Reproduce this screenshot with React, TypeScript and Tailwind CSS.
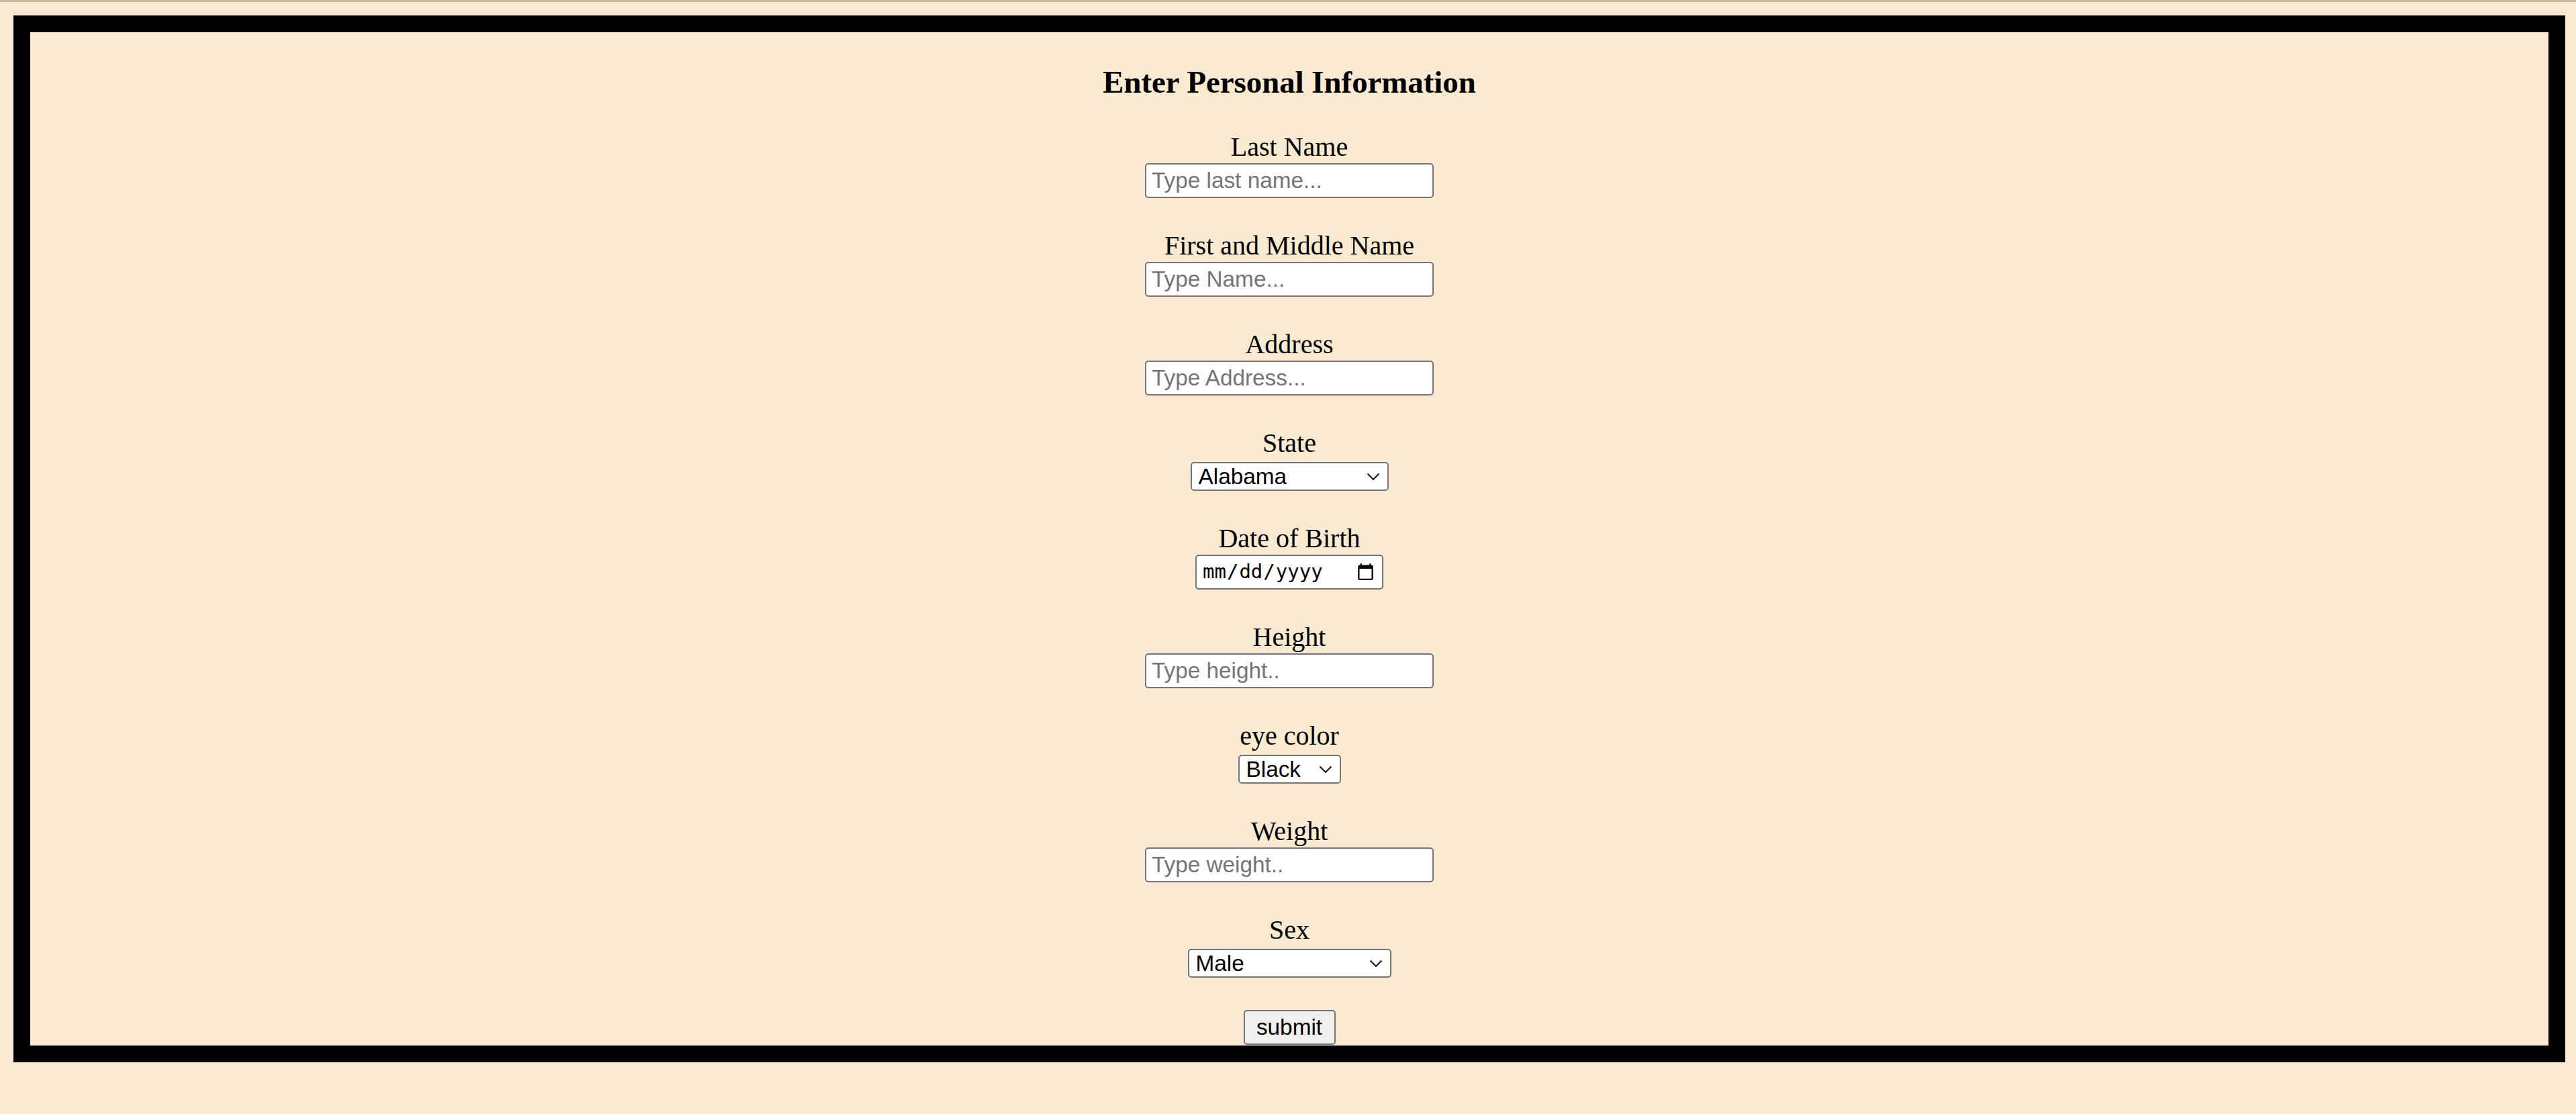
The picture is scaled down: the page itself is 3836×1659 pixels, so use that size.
import React, { useState } from "react";

const STATES = [
  "Alabama",
  "Alaska",
  "Arizona",
  "Arkansas",
  "California",
  "Colorado",
  "Connecticut",
  "Delaware",
  "Florida",
  "Georgia",
  "Massachusetts",
];

const EYE_COLORS = ["Black", "Brown", "Blue", "Green", "Hazel", "Gray"];

const SEXES = ["Male", "Female", "Prefer not to say"];

const labelClass =
  "block mt-[48px] font-['Liberation_Serif',serif] text-[40px] leading-[46px] text-black";

const inputClass =
  "block mt-[1px] w-[430px] h-[52px] px-[8px] bg-white border-2 border-[#767676] rounded-[5px] font-['Liberation_Sans',Arial,sans-serif] text-[33.33px] text-black placeholder:text-[#757575] outline-none";

function Chevron() {
  return (
    <svg
      width="20"
      height="12"
      viewBox="0 0 20 12"
      className="absolute right-[13px] top-1/2 -translate-y-1/2 pointer-events-none"
    >
      <polyline
        points="1.5,1.5 10,10 18.5,1.5"
        fill="none"
        stroke="#1a1a1a"
        strokeWidth="2.2"
      />
    </svg>
  );
}

function Select({
  options,
  width,
  value,
  onChange,
}: {
  options: string[];
  width: string;
  value: string;
  onChange: (v: string) => void;
}) {
  return (
    <div className={`relative mt-[5px] ${width}`}>
      <select
        value={value}
        onChange={(e) => onChange(e.target.value)}
        className="block w-full h-[43px] pl-[10px] pr-[40px] appearance-none bg-white border-2 border-[#767676] rounded-[5px] font-['Liberation_Sans',Arial,sans-serif] text-[33.33px] leading-none text-black outline-none"
      >
        {options.map((o) => (
          <option key={o}>{o}</option>
        ))}
      </select>
      <Chevron />
    </div>
  );
}

export default function App() {
  const [state, setState] = useState("Alabama");
  const [eyeColor, setEyeColor] = useState("Black");
  const [sex, setSex] = useState("Male");

  return (
    <div className="min-h-screen bg-[#f9ead1] border-t-[3px] border-[#c8b89b] pt-[20px] pl-[20px] pr-[16px]">
      <form
        onSubmit={(e) => e.preventDefault()}
        className="border-[25px] border-black flex flex-col items-center"
      >
        <h3 className="mt-[47px] -mb-[1px] font-['Liberation_Serif',serif] font-bold text-[46.8px] leading-[54px] text-black">
          Enter Personal Information
        </h3>

        {/* Last Name */}
        <label className={labelClass}>Last Name</label>
        <input type="text" placeholder="Type last name..." className={inputClass} />

        {/* First and Middle Name */}
        <label className={labelClass}>First and Middle Name</label>
        <input type="text" placeholder="Type Name..." className={inputClass} />

        {/* Address */}
        <label className={labelClass}>Address</label>
        <input type="text" placeholder="Type Address..." className={inputClass} />

        {/* State */}
        <label className={labelClass}>State</label>
        <Select options={STATES} width="w-[295px]" value={state} onChange={setState} />

        {/* Date of Birth */}
        <label className={labelClass}>Date of Birth</label>
        <input
          type="date"
          className="block mt-[1px] w-[280px] h-[52px] pl-[8px] pr-[8px] bg-white border-2 border-[#767676] rounded-[5px] font-['DejaVu_Sans_Mono',monospace] text-[29px] text-black outline-none"
        />

        {/* Height */}
        <label className={labelClass}>Height</label>
        <input type="text" placeholder="Type height.." className={inputClass} />

        {/* Eye color */}
        <label className={labelClass}>eye color</label>
        <Select options={EYE_COLORS} width="w-[153px]" value={eyeColor} onChange={setEyeColor} />

        {/* Weight */}
        <label className={labelClass}>Weight</label>
        <input type="text" placeholder="Type weight.." className={inputClass} />

        {/* Sex */}
        <label className={labelClass}>Sex</label>
        <Select options={SEXES} width="w-[303px]" value={sex} onChange={setSex} />

        <button
          type="submit"
          className="mt-[48px] mb-[1px] w-[137px] h-[52px] bg-[#efefef] border-2 border-[#767676] rounded-[5px] font-['Liberation_Sans',Arial,sans-serif] text-[33.33px] leading-none text-black"
        >
          submit
        </button>
      </form>
    </div>
  );
}
